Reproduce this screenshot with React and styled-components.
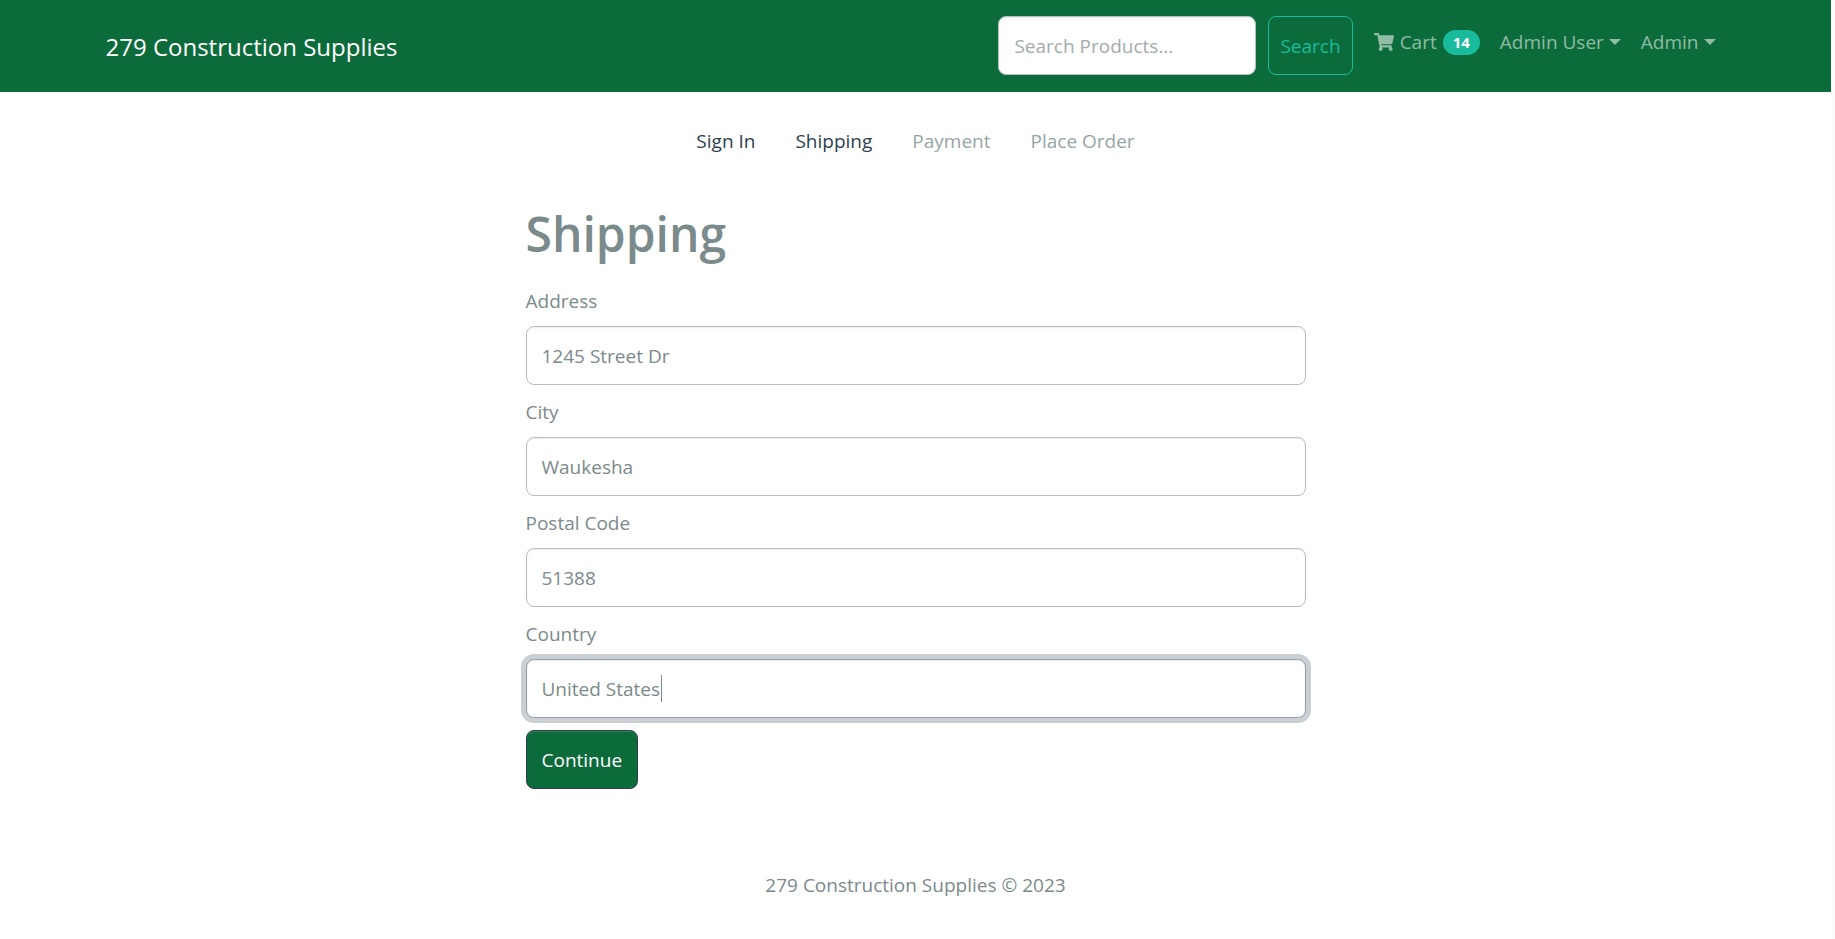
import React, { useEffect, useRef, useState } from 'react';
import styled, { createGlobalStyle } from 'styled-components';
import { FaShoppingCart } from 'react-icons/fa';

const GlobalStyle = createGlobalStyle`
  *, *::before, *::after { box-sizing: border-box; }
  body {
    margin: 0;
    background: #fff;
    color: #7b8a8b;
    font-family: 'Segoe UI', 'Open Sans', 'Noto Sans', sans-serif;
    font-size: 19px;
    line-height: 30px;
  }
  input, button { font: inherit; }
  a { color: inherit; text-decoration: none; }
`;

const Page = styled.div`
  min-height: 100vh;
  display: flex;
  flex-direction: column;
  border-right: 4px solid #fcfcfc;
`;

const Container = styled.div`
  width: 100%;
  max-width: 1650px;
  margin: 0 auto;
  padding: 0 15px;
`;

const Navbar = styled.header`
  background: #0c6b3b;
  padding: 16px 0 17px;
`;

const NavbarInner = styled(Container)`
  display: flex;
  align-items: flex-start;
  justify-content: space-between;
`;

const Brand = styled.a`
  padding: 14px 0 12px;
  color: #fff;
  font-size: 24px;
  line-height: 33px;
  white-space: nowrap;
`;

const NavGroup = styled.div`
  display: flex;
  align-items: flex-start;
`;

const SearchForm = styled.form`
  display: flex;
  gap: 12px;
  margin-right: 11px;
`;

const Input = styled.input`
  display: block;
  width: 100%;
  height: 59px;
  padding: 0 15px;
  border: 1px solid #b4bfbe;
  border-radius: 8px;
  background: #fff;
  color: #7b8a8b;
  box-shadow: inset 0 1px 2px rgba(0, 0, 0, 0.08);
  outline: 0;

  &::placeholder {
    color: #a2acac;
    opacity: 1;
  }

  &:focus {
    border-color: #969fa8;
    box-shadow: inset 0 1px 2px rgba(0, 0, 0, 0.08), 0 0 0 5px #cacfd3;
  }
`;

const SearchInput = styled(Input)`
  width: 258px;
`;

const Button = styled.button`
  height: 59px;
  padding: 0 ${(p) => (p.$outline ? 11 : 15)}px;
  border: 1px solid ${(p) => (p.$outline ? '#18bc9c' : '#2c3e50')};
  border-radius: 8px;
  background: ${(p) => (p.$outline ? 'transparent' : '#0c6b3b')};
  color: ${(p) => (p.$outline ? '#18bc9c' : '#fff')};
  box-shadow: ${(p) => (p.$outline ? 'none' : 'inset 0 1px 0 rgba(255, 255, 255, 0.15)')};
  cursor: pointer;
`;

const NavLinks = styled.nav`
  display: flex;
  padding-top: 11px;
`;

const NavLink = styled.a`
  display: flex;
  align-items: center;
  padding: 0 10px;
  color: rgba(255, 255, 255, 0.55);
  white-space: nowrap;
`;

const CartLabel = styled.span`
  margin: 0 6px;
`;

const Badge = styled.span`
  min-width: 37px;
  padding: 0 10px;
  border-radius: 13px;
  background: #18bc9c;
  color: #fff;
  font-size: 15px;
  font-weight: 700;
  line-height: 25px;
  text-align: center;
`;

const Arrow = styled.span`
  margin-left: 5px;
  border-top: 6px solid;
  border-left: 6px solid transparent;
  border-right: 6px solid transparent;
`;

const Main = styled.main`
  padding-top: 24px;
`;

const Steps = styled.nav`
  display: flex;
  justify-content: center;
  padding: 10px 0;
  margin-bottom: 38px;
`;

const Step = styled.a`
  padding: 0 20px;
  color: ${(p) => (p.$done ? '#2c3e50' : '#95a5a6')};
`;

const Form = styled.form`
  max-width: 780px;
  margin: 0 auto;
`;

const Title = styled.h1`
  margin: 0 0 22px;
  font-size: 48px;
  font-weight: 600;
  line-height: 60px;
`;

const Field = styled.div`
  margin-bottom: 12px;
`;

const Label = styled.label`
  display: block;
  margin-bottom: 10px;
`;

const InputWrap = styled.div`
  position: relative;
`;

const FieldInput = styled(Input)`
  caret-color: transparent;
`;

const TextCursor = styled.span`
  position: absolute;
  top: 16px;
  width: 1px;
  height: 27px;
  background: #7b8a8b;
  pointer-events: none;
`;

const Footer = styled.footer`
  padding: 81px 0 39px;
  text-align: center;
`;

const FIELDS = [
  { id: 'address', label: 'Address', value: '1245 Street Dr' },
  { id: 'city', label: 'City', value: 'Waukesha' },
  { id: 'postalCode', label: 'Postal Code', value: '51388' },
  { id: 'country', label: 'Country', value: 'United States' },
];

const STEPS = [
  { label: 'Sign In', done: true },
  { label: 'Shipping', done: true },
  { label: 'Payment' },
  { label: 'Place Order' },
];

// Horizontal position of the text cursor inside an input, in pixels.
function cursorOffset(input) {
  const style = getComputedStyle(input);
  const ctx = document.createElement('canvas').getContext('2d');
  ctx.font = `${style.fontSize} ${style.fontFamily}`;
  const before = input.value.slice(0, input.selectionStart);
  return Math.round(16 + ctx.measureText(before).width - input.scrollLeft);
}

function TextField({ id, label, initial, focused }) {
  const ref = useRef(null);
  const [value, setValue] = useState(initial);
  const [cursor, setCursor] = useState(null);
  const update = () => setCursor(cursorOffset(ref.current));

  useEffect(() => {
    if (!focused) return;
    const input = ref.current;
    input.focus();
    input.setSelectionRange(input.value.length, input.value.length);
    update();
  }, [focused]);

  return (
    <Field>
      <Label htmlFor={id}>{label}</Label>
      <InputWrap>
        <FieldInput
          id={id}
          type="text"
          ref={ref}
          value={value}
          onChange={(e) => {
            setValue(e.target.value);
            update();
          }}
          onFocus={update}
          onSelect={update}
          onBlur={() => setCursor(null)}
        />
        {cursor !== null && <TextCursor style={{ left: cursor }} />}
      </InputWrap>
    </Field>
  );
}

export default function App() {
  return (
    <Page>
      <GlobalStyle />
      <Navbar>
        <NavbarInner>
          <Brand href="#">279 Construction Supplies</Brand>
          <NavGroup>
            <SearchForm onSubmit={(e) => e.preventDefault()}>
              <SearchInput type="text" aria-label="Search Products" placeholder="Search Products..." />
              <Button $outline type="submit">Search</Button>
            </SearchForm>
            <NavLinks>
              <NavLink href="#cart">
                <FaShoppingCart size={20} />
                <CartLabel>Cart</CartLabel>
                <Badge>14</Badge>
              </NavLink>
              <NavLink href="#user">Admin User<Arrow /></NavLink>
              <NavLink href="#admin">Admin<Arrow /></NavLink>
            </NavLinks>
          </NavGroup>
        </NavbarInner>
      </Navbar>
      <Main>
        <Container>
          <Steps>
            {STEPS.map((s) => (
              <Step key={s.label} href="#" $done={s.done}>{s.label}</Step>
            ))}
          </Steps>
          <Form onSubmit={(e) => e.preventDefault()}>
            <Title>Shipping</Title>
            {FIELDS.map((f) => (
              <TextField
                key={f.id}
                id={f.id}
                label={f.label}
                initial={f.value}
                focused={f.id === 'country'}
              />
            ))}
            <Button type="submit">Continue</Button>
          </Form>
        </Container>
      </Main>
      <Footer>279 Construction Supplies © 2023</Footer>
    </Page>
  );
}
